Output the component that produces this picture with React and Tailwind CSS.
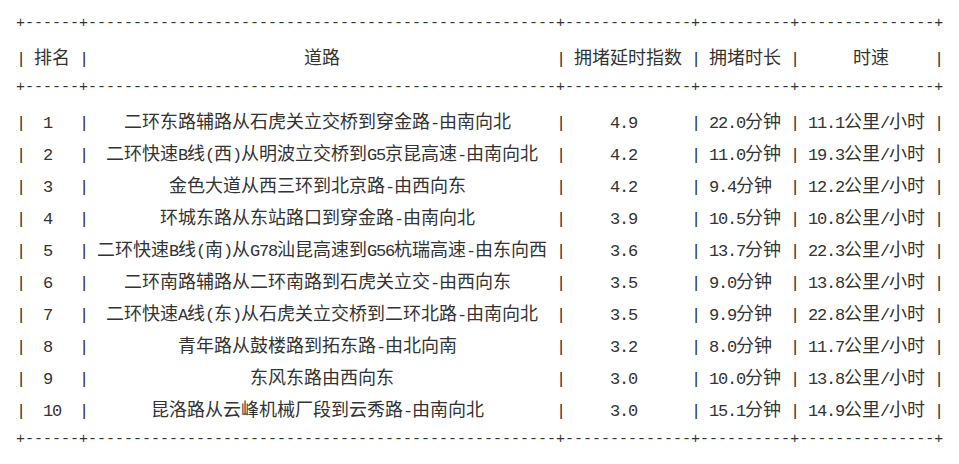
import React from "react";

const DASHES = [6, 52, 14, 10, 15];
const WIDTHS = ["w-[54px]", "w-[468px]", "w-[126px]", "w-[90px]", "w-[135px]"];

const header = ["排名", "道路", "拥堵延时指数", "拥堵时长", "时速"];

const rows = [
  ["1", "二环东路辅路从石虎关立交桥到穿金路-由南向北", "4.9", "22.0分钟", "11.1公里/小时"],
  ["2", "二环快速B线(西)从明波立交桥到G5京昆高速-由南向北", "4.2", "11.0分钟", "19.3公里/小时"],
  ["3", "金色大道从西三环到北京路-由西向东", "4.2", "9.4分钟", "12.2公里/小时"],
  ["4", "环城东路从东站路口到穿金路-由南向北", "3.9", "10.5分钟", "10.8公里/小时"],
  ["5", "二环快速B线(南)从G78汕昆高速到G56杭瑞高速-由东向西", "3.6", "13.7分钟", "22.3公里/小时"],
  ["6", "二环南路辅路从二环南路到石虎关立交-由西向东", "3.5", "9.0分钟", "13.8公里/小时"],
  ["7", "二环快速A线(东)从石虎关立交桥到二环北路-由南向北", "3.5", "9.9分钟", "22.8公里/小时"],
  ["8", "青年路从鼓楼路到拓东路-由北向南", "3.2", "8.0分钟", "11.7公里/小时"],
  ["9", "东风东路由西向东", "3.0", "10.0分钟", "13.8公里/小时"],
  ["10", "昆洛路从云峰机械厂段到云秀路-由南向北", "3.0", "15.1分钟", "14.9公里/小时"],
];

function textWidth(s) {
  let n = 0;
  for (const ch of s) n += ch.codePointAt(0) > 0x2e80 ? 2 : 1;
  return n;
}

function Mixed({ text }) {
  const runs = text.match(/[\x00-\x7f]+|[^\x00-\x7f]+/g) || [];
  return runs.map((r, i) =>
    /^[\x00-\x7f]/.test(r) ? (
      <span
        key={i}
        className="font-['Liberation_Mono',monospace] text-[17px] tracking-[-1.2px]"
      >
        {r}
      </span>
    ) : (
      <span key={i}>{r}</span>
    )
  );
}

const ruleText = "+" + DASHES.map((d) => "-".repeat(d)).join("+") + "+";

function Rule() {
  return (
    <div className="h-[32px] leading-[32px] whitespace-pre font-['Liberation_Mono',monospace] text-[15px] text-[#333]">
      {ruleText}
    </div>
  );
}

function Bar() {
  return (
    <span className="w-[9px] shrink-0 text-center">
      <span className="font-['Liberation_Mono',monospace] text-[17px]">|</span>
    </span>
  );
}

function Row({ cells, isHeader }) {
  return (
    <div className="flex h-[32px] leading-[32px] whitespace-pre text-[18px] text-[#333]">
      <Bar />
      {cells.map((c, i) => {
        const odd = (DASHES[i] - textWidth(c)) % 2 === 1;
        let shift = odd ? "pr-[9px]" : "";
        if (isHeader && i === 4) shift = "pl-[9px]";
        return (
          <React.Fragment key={i}>
            <span className={`${WIDTHS[i]} shrink-0 text-center ${shift}`}>
              <Mixed text={c} />
            </span>
            <Bar />
          </React.Fragment>
        );
      })}
    </div>
  );
}

export default function App() {
  return (
    <div className="w-[959px] h-[464px] bg-white pt-2 pl-4 font-['Noto_Sans_CJK_SC',sans-serif] text-[18px] text-[#333]">
      <Rule />
      <Row cells={header} isHeader />
      <Rule />
      {rows.map((r, i) => (
        <Row key={i} cells={r} />
      ))}
      <Rule />
    </div>
  );
}
